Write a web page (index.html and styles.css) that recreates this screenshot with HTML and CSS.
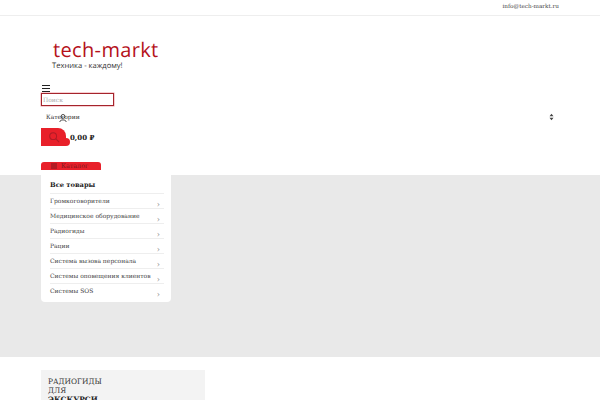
FILE: index.html
```html
<!DOCTYPE html>
<html lang="ru">
<head>
    <meta charset="UTF-8">
    <title>tech-markt</title>
    <link rel="stylesheet" href="styles.css">
</head>
<body>
    <div class="topbar">
        <a class="topbar-mail" href="#">info@tech-markt.ru</a>
    </div>
    <header class="header">
        <div class="logo">tech-markt</div>
        <div class="tagline">Техника - каждому!</div>
        <div class="burger"><span></span><span></span><span></span></div>
        <input class="search" type="text" placeholder="Поиск">
        <div class="cat-select">
            <span class="cat-label">Категории</span>
            <svg class="user-icon" width="8" height="8" viewBox="0 0 10 10">
                <circle cx="5" cy="3" r="2.4" fill="none" stroke="#222" stroke-width="1"/>
                <path d="M1 10 C1 6.5 9 6.5 9 10" fill="none" stroke="#222" stroke-width="1"/>
            </svg>
            <svg class="select-arrows" width="5" height="8" viewBox="0 0 6 10">
                <path d="M3 1 L5.5 4 L0.5 4 Z M3 9 L5.5 6 L0.5 6 Z" fill="#444"/>
            </svg>
        </div>
        <div class="cart">
            <div class="cart-btn">
                <svg width="12" height="12" viewBox="0 0 14 14">
                    <circle cx="6" cy="6" r="4" fill="none" stroke="#b01c26" stroke-width="1.2"/>
                    <path d="M9 9 L13 13" stroke="#b01c26" stroke-width="1.2"/>
                </svg>
                <span class="cart-dot"></span>
            </div>
            <span class="cart-sum">0,00 ₽</span>
        </div>
        <div class="catalog-btn">
            <svg width="6" height="6" viewBox="0 0 6 6">
                <path d="M0 1 H6 M0 3 H6 M0 5 H6" stroke="#7a1a1f" stroke-width="1"/>
            </svg>
            <span>Каталог</span>
        </div>
    </header>
    <section class="hero">
        <nav class="menu">
            <div class="menu-title">Все товары</div>
            <div class="menu-item">Громкоговорители<span class="chev">›</span></div>
            <div class="menu-item">Медицинское оборудование<span class="chev">›</span></div>
            <div class="menu-item">Радиогиды<span class="chev">›</span></div>
            <div class="menu-item">Рации<span class="chev">›</span></div>
            <div class="menu-item">Система вызова персонала<span class="chev">›</span></div>
            <div class="menu-item">Системы оповещения клиентов<span class="chev">›</span></div>
            <div class="menu-item">Системы SOS<span class="chev">›</span></div>
        </nav>
    </section>
    <section class="promo">
        <div class="promo-card">
            <div class="promo-text">РАДИОГИДЫ</div>
            <div class="promo-text">ДЛЯ</div>
            <div class="promo-text promo-strong">ЭКСКУРСИ</div>
        </div>
    </section>
</body>
</html>
```

FILE: styles.css
```css
html, body {
    height: 400px;
    overflow: hidden;
}
body {
    margin: 0;
    background-color: #fff;
    font-family: "DejaVu Serif", serif;
    text-rendering: geometricPrecision;
    color: #333;
}
.topbar {
    height: 15px;
    border-bottom: 1px solid #eee;
    display: flex;
    justify-content: flex-end;
    padding-right: 41px;
}
.topbar-mail {
    font-size: 5.7px;
    line-height: 15px;
    color: #444;
    text-decoration: none;
}
.header {
    height: 159px;
    padding-left: 41px;
    display: flex;
    flex-direction: column;
    align-items: flex-start;
}
.logo {
    margin: 23px 0 0 12px;
    font-family: "Open Sans", sans-serif;
    font-size: 20px;
    line-height: 22px;
    letter-spacing: 0.35px;
    color: #b5121b;
}
.tagline {
    margin-left: 11px;
    font-family: "Open Sans", sans-serif;
    font-size: 7.6px;
    line-height: 10px;
    color: #333;
}
.burger {
    margin: 14px 0 0 1px;
    width: 8px;
    display: flex;
    flex-direction: column;
    gap: 2px;
}
.burger span {
    height: 1px;
    background-color: #222;
}
.search {
    box-sizing: border-box;
    width: 73px;
    height: 13px;
    margin: 1px 0 0;
    padding: 0 1px;
    border: 1px solid #a5242c;
    box-shadow: 0 0 0 0.5px #f0a0a5;
    outline: none;
    font-family: "DejaVu Serif", serif;
    font-size: 6px;
}
.search::placeholder {
    color: #aaa;
}
.cat-select {
    position: relative;
    box-sizing: border-box;
    width: 518px;
    height: 20px;
    margin-top: 1px;
    padding: 0 5px;
    display: flex;
    align-items: center;
    justify-content: space-between;
}
.cat-label {
    font-size: 6px;
    color: #333;
}
.user-icon {
    position: absolute;
    left: 18px;
    top: 7px;
}
.cart {
    display: flex;
    align-items: center;
    gap: 4px;
    margin-top: 1px;
}
.cart-btn {
    position: relative;
    width: 25px;
    height: 18px;
    display: flex;
    align-items: center;
    justify-content: center;
    background-color: #e8202a;
    border-radius: 0 8px 0 0;
}
.cart-dot {
    position: absolute;
    right: -4px;
    bottom: 0;
    width: 8px;
    height: 8px;
    border-radius: 50%;
    background-color: #e8202a;
}
.cart-sum {
    font-size: 7px;
    font-weight: bold;
    color: #222;
}
.catalog-btn {
    margin-top: 16px;
    box-sizing: border-box;
    width: 60px;
    height: 8px;
    padding-left: 10px;
    display: flex;
    align-items: center;
    gap: 4px;
    background-color: #e8202a;
    border-radius: 3px 3px 0 0;
    font-size: 6.4px;
    line-height: 8px;
    color: #7a1a1f;
}
.hero {
    height: 182px;
    padding-left: 41px;
    background-color: #e9e9e9;
}
.menu {
    box-sizing: border-box;
    width: 130px;
    height: 127px;
    padding: 4px 7px 0 9px;
    background-color: #fff;
    border-radius: 0 0 4px 4px;
}
.menu-title {
    height: 14px;
    font-size: 6.7px;
    font-weight: bold;
    line-height: 12px;
    color: #222;
}
.menu-item {
    position: relative;
    box-sizing: border-box;
    height: 15px;
    border-top: 1px solid #eee;
    font-size: 6px;
    line-height: 15px;
    color: #444;
}
.menu-item .chev {
    position: absolute;
    right: 4px;
    top: 3px;
    font-size: 8px;
    color: #888;
}
.promo {
    padding: 13px 0 0 41px;
}
.promo-card {
    box-sizing: border-box;
    width: 164px;
    height: 30px;
    padding: 7px;
    background-color: #f3f3f3;
}
.promo-text {
    font-size: 7.4px;
    line-height: 9px;
    color: #333;
}
.promo-strong {
    font-weight: bold;
    color: #222;
}
```
